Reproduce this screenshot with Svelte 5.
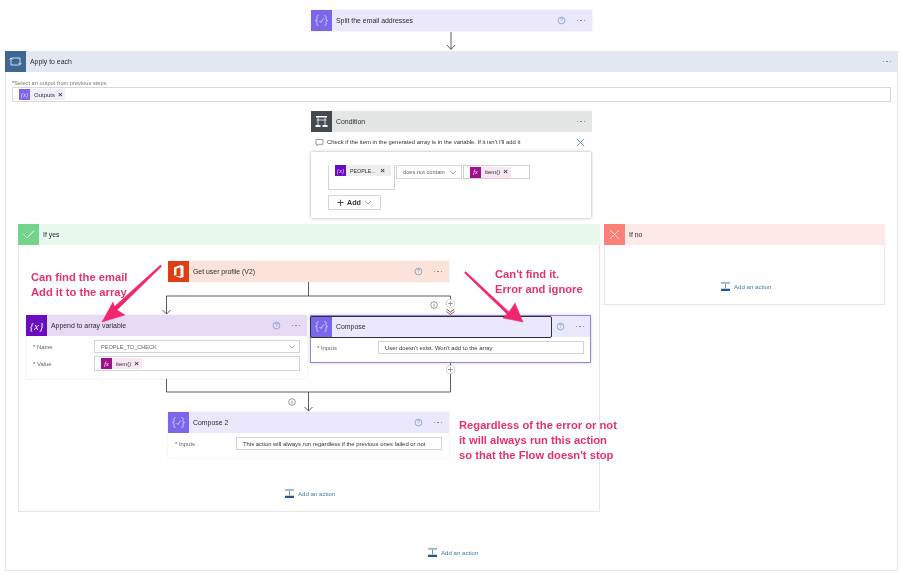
<script>
  const addActions = ['add-no', 'add-yes', 'add-root'];
</script>

{#snippet composeIcon()}
  <svg viewBox="0 0 21 21" class="glyph">
    <path d="M7.500 5.500c-2 0-1.500 1.500-1.500 3s-.5 2-1.500 2c1 0 1.500 .5 1.500 2s-.5 3 1.500 3M13.500 5.500c2 0 1.500 1.500 1.500 3s.5 2 1.500 2c-1 0-1.500 .5-1.500 2s.5 3-1.500 3M8.500 11l1.500 1.500 2.500-4" fill="none" stroke="#fff" stroke-opacity=".8" stroke-width=".8" />
  </svg>
{/snippet}

{#snippet varIcon()}
  <span class="var-glyph">{'{x}'}</span>
{/snippet}

{#snippet officeIcon()}
  <svg viewBox="0 0 21 21" class="glyph">
    <path d="M6 6.500 12.500 4 15.500 5v11l-3 1-6.500-2.500 6.500 1V6.500l-4 1v6L6 14.500z" fill="#fff" />
  </svg>
{/snippet}

{#snippet help()}
  <svg viewBox="0 0 9 9" class="help">
    <circle cx="4.500" cy="4.500" r="3.400" fill="none" stroke="#6f8fc9" stroke-width=".7" />
    <text x="4.500" y="6.400" text-anchor="middle">?</text>
  </svg>
{/snippet}

{#snippet dots()}
  <span class="dots"><i></i><i></i><i></i></span>
{/snippet}

{#snippet header(cls, icon, title)}
  <div class="head {cls}">
    <span class="icon">{@render icon()}</span>
    <span class="title">{title}</span>
    {@render help()}
    {@render dots()}
  </div>
{/snippet}

{#snippet actionLink(cls)}
  <div class="add-action {cls}">
    <svg viewBox="0 0 12 11" class="action-icon">
      <path d="M1 1h10v2H1z" fill="#9fb3c6" />
      <path d="M6 3v5" stroke="#3e648f" stroke-width=".8" />
      <path d="M1 8.500h10V11H1z" fill="#24568f" />
    </svg>
    <span>Add an action</span>
  </div>
{/snippet}

{#snippet token(cls, icon, label)}
  <span class="token {cls}">
    <span class="token-icon">{@render icon()}</span>
    <span class="token-label">{label}</span>
    <span class="token-x">×</span>
  </span>
{/snippet}

{#snippet fx()}
  <span class="fx">fx</span>
{/snippet}

{#snippet smallVar()}
  <span class="small-var">{'{x}'}</span>
{/snippet}

<div class="canvas">
  <!-- outer loop scope -->
  <section class="scope apply">
    <div class="head h-loop">
      <span class="icon">
        <svg viewBox="0 0 21 21" class="glyph">
          <path d="M6.500 8V7H15v6.500M15 13.500l-1.500-1.500M15 13.500l1.500-1.500M14.500 14H6V7.500M6 7l-1.500 1.500M6 7l1.500 1.500" fill="none" stroke="#fff" stroke-opacity=".85" stroke-width=".9" />
        </svg>
      </span>
      <span class="title">Apply to each</span>
      {@render dots()}
    </div>
    <div class="apply-body">
      <div class="mini-label"><b>*</b>Select an output from previous steps</div>
      <div class="apply-input">
        {@render token('t-outputs', smallVar, 'Outputs')}
      </div>
    </div>
  </section>

  <section class="scope yes">
    <div class="head h-yes">
      <span class="icon">
        <svg viewBox="0 0 21 21" class="glyph"><path d="M5.500 10.500l3.500 3.500 7-7.500" fill="none" stroke="#fff" stroke-width="1" /></svg>
      </span>
      <span class="title">If yes</span>
    </div>
  </section>

  <section class="scope no">
    <div class="head h-no">
      <span class="icon">
        <svg viewBox="0 0 21 21" class="glyph"><path d="M6 6l9 9M15 6l-9 9" fill="none" stroke="#fff" stroke-opacity=".75" stroke-width="1" /></svg>
      </span>
      <span class="title">If no</span>
    </div>
  </section>

  <!-- connectors sit under the cards -->
  <svg class="wires" viewBox="0 0 900 577">
    <g fill="none" stroke="#4a4a4a" stroke-width=".9">
      <path d="M451 32v17M447 45l4 4.500 4-4.500" />
      <path d="M308.500 282v14M166.500 314v-18H450.500v8" />
      <path d="M162.500 310l4 4 4-4" />
      <path d="M166.500 378v14H450.500v-30" />
      <path d="M308.500 392v19M304.500 407l4 4 4-4" />
    </g>
    <path d="M446.500 309l4 3 4-3M446.500 311.500l4 3 4-3" fill="none" stroke="#a33a3a" stroke-width=".9" />
    <g class="plus">
      <circle cx="450.500" cy="303.500" r="4.200" />
      <path d="M448 303.500h5M450.500 301v5" />
      <circle cx="450.500" cy="369.500" r="4.200" />
      <path d="M448 369.500h5M450.500 367v5" />
    </g>
    <g class="info">
      <circle cx="434" cy="305" r="3.300" />
      <path d="M434 304v2.800M434 302.800v.6" />
      <circle cx="292" cy="402" r="3.300" />
      <path d="M292 401v2.800M292 399.800v.6" />
    </g>
  </svg>

  <div class="card split">
    {@render header('h-compose', composeIcon, 'Split the email addresses')}
  </div>

  <div class="card condition">
    <div class="head h-cond">
      <span class="icon">
        <svg viewBox="0 0 21 21" class="glyph">
          <path d="M5 5h11v1.500H5zM4.500 14h5v2h-5zM11.500 14h5v2h-5z" fill="#fff" />
          <path d="M7 6.500V14M14 6.500V14M5.500 9h10" fill="none" stroke="#fff" stroke-width=".8" />
        </svg>
      </span>
      <span class="title">Condition</span>
      {@render dots()}
    </div>
    <div class="comment">
      <svg viewBox="0 0 9 9" class="comment-icon">
        <path d="M1 1.500h7v4.800H3.500L2 7.800V6.300H1z" fill="none" stroke="#555" stroke-width=".6" />
      </svg>
      <span class="comment-text">Check if the item in the generated array is in the variable. If it isn't I'll add it</span>
      <svg viewBox="0 0 9 9" class="close"><path d="M.8.800l7.400 7.400M8.200.800L.8 8.200" stroke="#4f86a8" stroke-width=".8" /></svg>
    </div>
    <div class="cond-body">
      <div class="cond-row">
        <div class="cond-left">
          {@render token('t-people', smallVar, 'PEOPLE...')}
        </div>
        <div class="cond-op">
          <span>does not contain</span>
          <svg viewBox="0 0 8 5" class="chev"><path d="M1 1l3 3 3-3" fill="none" stroke="#777" stroke-width=".6" /></svg>
        </div>
        <div class="cond-right">
          {@render token('t-item', fx, 'item()')}
        </div>
      </div>
      <div class="add-btn">
        <span class="add-plus">+</span>
        <b>Add</b>
        <svg viewBox="0 0 8 5" class="chev"><path d="M1 1l3 3 3-3" fill="none" stroke="#666" stroke-width=".6" /></svg>
      </div>
    </div>
  </div>

  <div class="card profile">
    {@render header('h-office', officeIcon, 'Get user profile (V2)')}
  </div>

  <div class="card append">
    {@render header('h-var', varIcon, 'Append to array variable')}
    <div class="fields">
      <span class="fld-label"><b>*</b> Name</span>
      <div class="input select">
        <span>PEOPLE_TO_CHECK</span>
        <svg viewBox="0 0 8 5" class="chev"><path d="M1 1l3 3 3-3" fill="none" stroke="#777" stroke-width=".6" /></svg>
      </div>
      <span class="fld-label"><b>*</b> Value</span>
      <div class="input tall">
        {@render token('t-item', fx, 'item()')}
      </div>
    </div>
  </div>

  <div class="card compose">
    <div class="head h-compose">
      <div class="selected">
        <span class="icon">{@render composeIcon()}</span>
        <span class="title">Compose</span>
      </div>
      {@render help()}
      {@render dots()}
    </div>
    <div class="fields">
      <span class="fld-label"><b>*</b> Inputs</span>
      <div class="input dark"><span>User doesn't exist. Won't add to the array</span></div>
    </div>
  </div>

  <div class="card compose2">
    {@render header('h-compose', composeIcon, 'Compose 2')}
    <div class="fields">
      <span class="fld-label"><b>*</b> Inputs</span>
      <div class="input dark"><span>This action will always run regardless if the previous ones failed or not</span></div>
    </div>
  </div>

  {#each addActions as cls}
    {@render actionLink(cls)}
  {/each}

  <!-- hand drawn notes on top of the flow -->
  <svg class="wires" viewBox="0 0 900 577">
    <path class="note-arrow" d="M161.500 266.500 117 310 125 315 102 322 113 302 114.500 306.500 160.500 265z" />
    <path class="note-arrow" d="M465.500 271.500 509 312 515 303 523 322 503 318 507 314 464.500 273z" />
  </svg>

  <div class="note n1">Can find the email<br />Add it to the array</div>
  <div class="note n2">Can't find it.<br />Error and ignore</div>
  <div class="note n3">Regardless of the error or not<br />it will always run this action<br />so that the Flow doesn't stop</div>
</div>

<style>
  :global(body) {
    margin: 0;
    background: #fff;
  }

  .canvas {
    position: relative;
    width: 900px;
    height: 577px;
    overflow: hidden;
    background: #fff;
    font-family: "Liberation Sans", Arial, sans-serif;
    color: #333;
    filter: blur(0.35px);
  }

  /* nodes of the diagram */
  .scope,
  .card,
  .add-action,
  .note,
  .wires {
    position: absolute;
  }

  .wires {
    left: 0;
    top: 0;
    width: 900px;
    height: 577px;
    pointer-events: none;
  }

  .scope {
    box-sizing: border-box;
    background: #fff;
    border: 1px solid #e6e6e6;
  }

  .apply { left: 5px; top: 51px; width: 893px; height: 520px; }
  .yes { left: 18px; top: 224px; width: 582px; height: 288px; }
  .no { left: 604px; top: 224px; width: 281px; height: 81px; }

  .card {
    box-sizing: border-box;
    width: 281px;
    background: #fff;
    box-shadow: 0 0 1.5px rgba(0, 0, 0, 0.14);
  }

  .split { left: 311px; top: 10px; }
  .condition { left: 311px; top: 111px; box-shadow: none; }
  .profile { left: 168px; top: 261px; }
  .append { left: 26px; top: 315px; }
  .compose { left: 310px; top: 315px; border: 1px solid #8f86d6; box-shadow: 0 0 3px rgba(90, 80, 180, 0.3); }
  .compose2 { left: 168px; top: 412px; }

  .head {
    display: flex;
    align-items: center;
    height: 21px;
    padding-right: 5px;
    font-size: 6.9px;
    color: #2b2b2b;
  }

  .scope .head { margin: -1px -1px 0; }
  .compose .head { padding-right: 4px; }

  .icon {
    flex: none;
    display: flex;
    align-items: center;
    justify-content: center;
    width: 21px;
    height: 21px;
    margin-right: 4px;
  }

  .title { flex: 1; }

  .glyph { width: 21px; height: 21px; display: block; }

  .var-glyph {
    font-family: "Liberation Serif", serif;
    font-style: italic;
    font-size: 11px;
    color: #fff;
  }

  .h-compose { background: #ece8fb; }
  .h-compose .icon { background: #7a67ea; }
  .h-loop { background: #e3e7ef; }
  .h-loop .icon { background: #3f6794; }
  .h-cond { background: #e4e5e5; }
  .h-cond .icon { background: #454a50; }
  .h-yes { background: #e8f8ec; }
  .h-yes .icon { background: #75d48b; }
  .h-no { background: #fde9e8; }
  .h-no .icon { background: #fb8078; }
  .h-office { background: #fbe3da; }
  .h-office .icon { background: #dc3e15; }
  .h-var { background: #e7daf5; }
  .h-var .icon { background: #6a0dbf; }

  .selected {
    flex: 1;
    display: flex;
    align-items: center;
    height: 20px;
    margin-right: 5px;
    box-sizing: border-box;
    outline: 1px solid #2f2f3a;
    border-radius: 1px;
  }

  .selected .icon { height: 20px; }

  .help {
    flex: none;
    width: 9px;
    height: 9px;
    margin-right: 11px;
  }

  .help text {
    font-size: 5px;
    fill: #6f8fc9;
  }

  .dots {
    flex: none;
    display: flex;
    gap: 2px;
    width: 10px;
  }

  .dots i {
    width: 1.4px;
    height: 1.4px;
    border-radius: 50%;
    background: #777;
  }

  .apply-body { padding: 8px 6px 0; }

  .mini-label {
    height: 7px;
    font-size: 5.7px;
    line-height: 7px;
    color: #777;
  }

  .mini-label b { color: #a33; font-weight: 400; }

  .apply-input {
    box-sizing: border-box;
    height: 15px;
    border: 1px solid #d8d8d8;
    padding-left: 6px;
    display: flex;
    align-items: center;
  }

  .token {
    display: inline-flex;
    align-items: center;
    height: 11px;
    font-size: 6px;
    color: #333;
  }

  .token-icon {
    display: flex;
    align-items: center;
    justify-content: center;
    width: 11px;
    height: 11px;
    margin-right: 4px;
  }

  .token-x {
    font-size: 8px;
    font-weight: 700;
    line-height: 1;
    margin-left: 3px;
    color: #444;
  }

  .t-outputs { background: #f1eefb; padding-right: 2px; }
  .t-outputs .token-icon { background: #7a67ea; }

  .t-people { background: #eeeeee; width: 56px; font-size: 5.3px; }
  .t-people .token-icon { background: #6a0dbf; }
  .t-people .token-label { flex: 1; }
  .t-people .token-x { margin-right: 6px; }

  .t-item { background: #f7e6f3; padding-right: 3px; }
  .t-item .token-icon { background: #a0108e; }

  .small-var,
  .fx {
    font-family: "Liberation Serif", serif;
    font-style: italic;
    font-size: 6px;
    color: #fff;
  }

  .small-var { opacity: 0.85; }

  .comment {
    display: flex;
    align-items: center;
    height: 20px;
    padding: 0 7px 0 4px;
    font-size: 5.9px;
    color: #333;
  }

  .comment-icon { width: 9px; height: 9px; margin-right: 3px; flex: none; }
  .comment-text { flex: 1; }
  .close { width: 9px; height: 9px; flex: none; }

  .cond-body {
    box-sizing: border-box;
    height: 66px;
    margin-right: 1px;
    padding: 13px 0 0 17px;
    background: #fff;
    box-shadow: 0 0 3px rgba(0, 0, 0, 0.35);
  }

  .cond-row {
    display: flex;
    align-items: flex-start;
    gap: 1px;
  }

  .cond-left {
    box-sizing: border-box;
    display: flex;
    align-items: flex-start;
    width: 67px;
    height: 25px;
    border: 1px solid #d4d4d4;
    border-top: none;
    padding-left: 6px;
  }

  .cond-op,
  .cond-right {
    box-sizing: border-box;
    display: flex;
    align-items: center;
    height: 14px;
    border: 1px solid #d8d8d8;
  }

  .cond-op {
    width: 66px;
    padding: 0 4px 0 6px;
    justify-content: space-between;
    font-size: 5.7px;
    color: #666;
  }

  .cond-right {
    width: 67px;
    padding-left: 6px;
    border-color: #cfcfcf;
  }

  .chev { width: 8px; height: 5px; flex: none; }

  .add-btn {
    box-sizing: border-box;
    display: flex;
    align-items: center;
    justify-content: center;
    width: 53px;
    height: 15px;
    margin-top: 5px;
    border: 1px solid #d4d4d4;
    border-radius: 1px;
    font-size: 7.2px;
    gap: 3px;
  }

  .add-plus { font-size: 12px; font-weight: 300; line-height: 1; color: #444; }

  .fields {
    display: grid;
    grid-template-columns: 61px 206px;
    align-items: center;
    row-gap: 3px;
    padding: 4px 7px 8px;
  }

  .compose .fields { padding-left: 6px; }

  .fld-label {
    font-size: 5.9px;
    color: #666;
  }

  .fld-label b { color: #a33; font-weight: 400; }

  .input {
    box-sizing: border-box;
    display: flex;
    align-items: center;
    height: 13px;
    padding-left: 6px;
    border: 1px solid #d4d4d4;
    font-size: 5.6px;
    color: #666;
  }

  .input.dark { color: #333; font-size: 5.9px; }
  .input.select { justify-content: space-between; padding-right: 3px; }
  .input.tall { height: 15px; }

  .add-action {
    display: flex;
    align-items: center;
    gap: 3px;
    font-size: 6.1px;
    color: #3f7ea6;
  }

  .add-no { left: 720px; top: 281px; }
  .add-yes { left: 284px; top: 488px; }
  .add-root { left: 427px; top: 547px; }

  .action-icon { width: 11px; height: 10px; display: block; }

  .plus circle { fill: #fff; stroke: #bbb; stroke-width: 0.7; }
  .plus path { stroke: #666; stroke-width: 0.6; fill: none; }
  .info circle, .info path { fill: none; stroke: #555; stroke-width: 0.6; }

  .note-arrow { fill: #f2266f; stroke: #f2266f; stroke-width: 0.5; }

  .note {
    font-family: "Liberation Sans", Arial, sans-serif;
    font-weight: 700;
    font-size: 11.2px;
    line-height: 15px;
    color: #e2326f;
    white-space: nowrap;
  }

  .n1 { left: 31px; top: 270px; }
  .n2 { left: 495px; top: 267px; }
  .n3 { left: 459px; top: 418px; }
</style>
